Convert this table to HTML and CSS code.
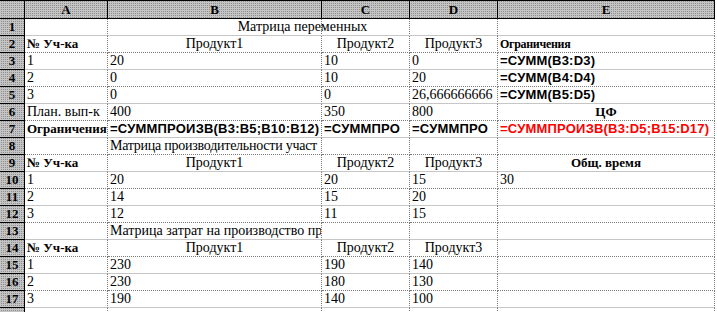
FILE: index.html
```html
<!DOCTYPE html>
<html lang="ru">
<head>
<meta charset="utf-8">
<title>Лист Excel</title>
<link rel="stylesheet" href="styles.css">
</head>
<body>
<div class="sheet">
  <div class="row hdr">
    <div class="corner"></div>
    <div class="colh">A</div>
    <div class="colh">B</div>
    <div class="colh">C</div>
    <div class="colh">D</div>
    <div class="colh">E</div>
  </div>
  <div class="row odd">
    <div class="rh">1</div>
    <div class="cell"></div>
    <div class="cell merged ctr">Матрица переменных</div>
    <div class="cell"></div>
  </div>
  <div class="row even">
    <div class="rh">2</div>
    <div class="cell b">№ Уч-ка</div>
    <div class="cell ctr">Продукт1</div>
    <div class="cell ctr">Продукт2</div>
    <div class="cell ctr">Продукт3</div>
    <div class="cell b small">Ограничения</div>
  </div>
  <div class="row odd">
    <div class="rh">3</div>
    <div class="cell">1</div>
    <div class="cell">20</div>
    <div class="cell">10</div>
    <div class="cell">0</div>
    <div class="cell f">=СУММ(B3:D3)</div>
  </div>
  <div class="row even">
    <div class="rh">4</div>
    <div class="cell">2</div>
    <div class="cell">0</div>
    <div class="cell">10</div>
    <div class="cell">20</div>
    <div class="cell f">=СУММ(B4:D4)</div>
  </div>
  <div class="row odd">
    <div class="rh">5</div>
    <div class="cell">3</div>
    <div class="cell">0</div>
    <div class="cell">0</div>
    <div class="cell">26,666666666</div>
    <div class="cell f">=СУММ(B5:D5)</div>
  </div>
  <div class="row even">
    <div class="rh">6</div>
    <div class="cell">План. вып-к</div>
    <div class="cell">400</div>
    <div class="cell">350</div>
    <div class="cell">800</div>
    <div class="cell b ctr">ЦФ</div>
  </div>
  <div class="row odd">
    <div class="rh">7</div>
    <div class="cell b">Ограничения</div>
    <div class="cell f">=СУММПРОИЗВ(B3:B5;B10:B12)</div>
    <div class="cell f">=СУММПРО</div>
    <div class="cell f">=СУММПРО</div>
    <div class="cell f red">=СУММПРОИЗВ(B3:D5;B15:D17)</div>
  </div>
  <div class="row even">
    <div class="rh">8</div>
    <div class="cell"></div>
    <div class="cell tight">Матрица производительности участ</div>
    <div class="cell"></div>
    <div class="cell"></div>
    <div class="cell"></div>
  </div>
  <div class="row odd">
    <div class="rh">9</div>
    <div class="cell b">№ Уч-ка</div>
    <div class="cell ctr">Продукт1</div>
    <div class="cell ctr">Продукт2</div>
    <div class="cell ctr">Продукт3</div>
    <div class="cell b ctr">Общ. время</div>
  </div>
  <div class="row even">
    <div class="rh">10</div>
    <div class="cell">1</div>
    <div class="cell">20</div>
    <div class="cell">20</div>
    <div class="cell">15</div>
    <div class="cell">30</div>
  </div>
  <div class="row odd">
    <div class="rh">11</div>
    <div class="cell">2</div>
    <div class="cell">14</div>
    <div class="cell">15</div>
    <div class="cell">20</div>
    <div class="cell"></div>
  </div>
  <div class="row even">
    <div class="rh">12</div>
    <div class="cell">3</div>
    <div class="cell">12</div>
    <div class="cell">11</div>
    <div class="cell">15</div>
    <div class="cell"></div>
  </div>
  <div class="row odd">
    <div class="rh">13</div>
    <div class="cell"></div>
    <div class="cell">Матрица затрат на производство пр</div>
    <div class="cell"></div>
    <div class="cell"></div>
    <div class="cell"></div>
  </div>
  <div class="row even">
    <div class="rh">14</div>
    <div class="cell b">№ Уч-ка</div>
    <div class="cell ctr">Продукт1</div>
    <div class="cell ctr">Продукт2</div>
    <div class="cell ctr">Продукт3</div>
    <div class="cell"></div>
  </div>
  <div class="row odd">
    <div class="rh">15</div>
    <div class="cell">1</div>
    <div class="cell">230</div>
    <div class="cell">190</div>
    <div class="cell">140</div>
    <div class="cell"></div>
  </div>
  <div class="row even">
    <div class="rh">16</div>
    <div class="cell">2</div>
    <div class="cell">230</div>
    <div class="cell">180</div>
    <div class="cell">130</div>
    <div class="cell"></div>
  </div>
  <div class="row odd">
    <div class="rh">17</div>
    <div class="cell">3</div>
    <div class="cell">190</div>
    <div class="cell">140</div>
    <div class="cell">100</div>
    <div class="cell"></div>
  </div>
  <div class="row even">
    <div class="rh"></div>
    <div class="cell"></div>
    <div class="cell"></div>
    <div class="cell"></div>
    <div class="cell"></div>
    <div class="cell"></div>
  </div>
</div>
</body>
</html>
```

FILE: styles.css
```css
html, body {
  margin: 0;
  padding: 0;
  background: #ffffff;
  overflow: hidden;
}

.sheet {
  display: grid;
  grid-template-columns: 25px 83px 214px 88px 88px 217px;
  grid-template-rows: 19px repeat(18, 17px);
  width: 715px;
  font-family: "Liberation Serif", "Times New Roman", serif;
  font-size: 14px;
  color: #000;
}

.row {
  display: contents;
}

.corner,
.colh,
.rh {
  box-sizing: border-box;
  background-color: #c4c4c4;
  background-image: conic-gradient(#8e8e8e 0 25%, transparent 0 100%);
  background-size: 2px 2px;
  font-weight: bold;
  font-size: 13px;
  display: flex;
  align-items: center;
  justify-content: center;
  border-right: 1px solid #000;
  border-bottom: 1px solid #000;
  line-height: 16px;
}

.corner,
.colh {
  border-top: 1px solid #000;
}

.cell {
  box-sizing: border-box;
  border-right: 1px dotted #7a7a7a;
  border-bottom: 1px solid #c6c6c6;
  padding: 0 2px;
  line-height: 16px;
  white-space: nowrap;
  overflow: hidden;
  min-width: 0;
}

.even > .cell {
  border-bottom: 1px dotted #7a7a7a;
}

.ctr {
  text-align: center;
}

.tight {
  letter-spacing: -0.25px;
}

.b {
  font-weight: bold;
  font-size: 13px;
}

.small {
  font-size: 12px;
  letter-spacing: -0.3px;
}

.f {
  font-family: "Liberation Sans", Arial, sans-serif;
  font-weight: bold;
  font-size: 13px;
  letter-spacing: 0.2px;
}

.red {
  color: #ff0000;
}

.merged {
  grid-column: span 3;
  overflow: visible;
  background-image:
    repeating-linear-gradient(to bottom, #7a7a7a 0 1px, transparent 1px 2px),
    repeating-linear-gradient(to bottom, #7a7a7a 0 1px, transparent 1px 2px);
  background-size: 1px 100%, 1px 100%;
  background-position: 213px 0, 301px 0;
  background-repeat: no-repeat;
}
```
